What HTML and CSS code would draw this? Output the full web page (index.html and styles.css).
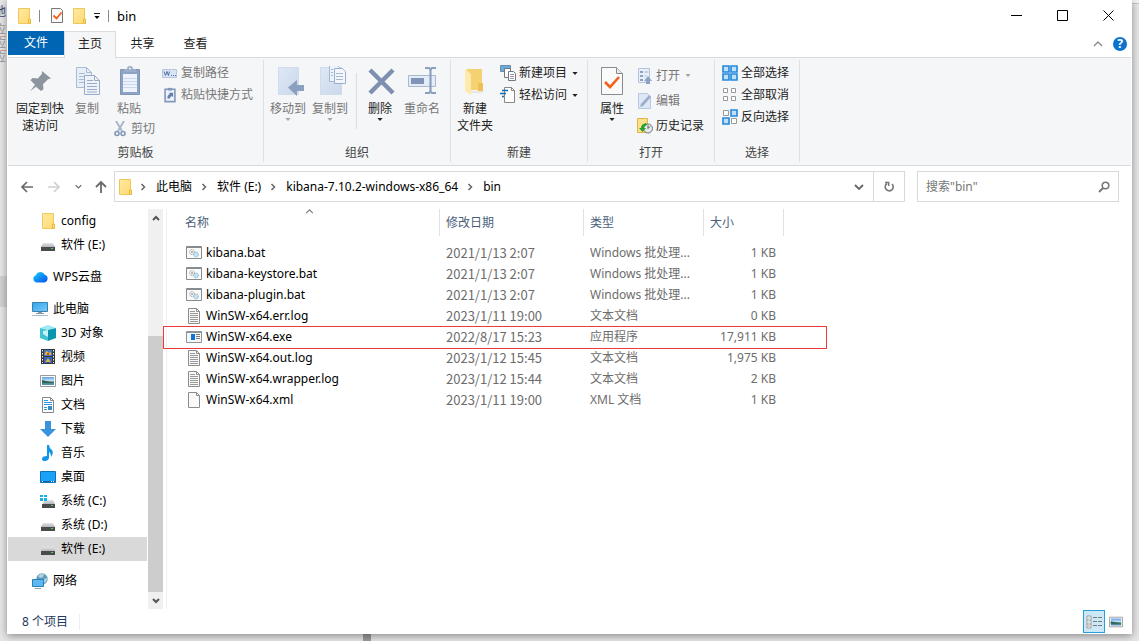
FILE: index.html
```html
<!DOCTYPE html>
<html lang="zh-CN">
<head>
<meta charset="utf-8">
<title>bin</title>
<link rel="stylesheet" href="styles.css">
</head>
<body>
<svg class="sprite" aria-hidden="true">
  <defs>
    <linearGradient id="gFolder" x1="0" y1="0" x2="1" y2="1"><stop offset="0" stop-color="#ffe9a2"/><stop offset="1" stop-color="#ffd970"/></linearGradient>
    <linearGradient id="gBlue" x1="0" y1="0" x2="1" y2="1"><stop offset="0" stop-color="#2fa4ef"/><stop offset="1" stop-color="#7ccaf8"/></linearGradient>
    <linearGradient id="gPale" x1="0" y1="0" x2="1" y2="1"><stop offset="0" stop-color="#dfe8f5"/><stop offset="1" stop-color="#c9d8ec"/></linearGradient>
    <linearGradient id="gCloud" x1="0" y1="0" x2="1" y2="1"><stop offset="0" stop-color="#17d1f5"/><stop offset="1" stop-color="#0a4df0"/></linearGradient>
    <linearGradient id="gDrive" x1="0" y1="0" x2="0" y2="1"><stop offset="0" stop-color="#e3e4e6"/><stop offset="1" stop-color="#b5b7ba"/></linearGradient>
    <linearGradient id="gPhoto" x1="0" y1="0" x2="0" y2="1"><stop offset="0" stop-color="#5b9ee8"/><stop offset=".5" stop-color="#cfe6f5"/><stop offset=".6" stop-color="#3e7b6d"/><stop offset="1" stop-color="#5f94b8"/></linearGradient>
  </defs>
  <symbol id="folder" viewBox="0 0 16 18"><path d="M1.500 1.500h11v10l1 1v4h-12z" fill="url(#gFolder)" stroke="#ecc95a"/><path d="M11.500 16v-4h2v4.500h-2" fill="#ffdf80" stroke="#e6b93c"/></symbol>
  <symbol id="checkdoc" viewBox="0 0 32 32"><path d="M5.500 1.500h15l6 6v21h-21z" fill="#fafafa" stroke="#8a8a8a"/><path d="M20.500 1.500v6h6" fill="#e8e8e8" stroke="#8a8a8a"/><path d="M9 16l5 5 9-10" fill="none" stroke="#f4601c" stroke-width="2.600"/></symbol>
  <symbol id="checkdocsm" viewBox="0 0 14 17"><path d="M1.500 1.500h9l2 2v12h-11z" fill="#fafafa" stroke="#777"/><path d="M3.500 8.500l3 3 5-6" fill="none" stroke="#f0601c" stroke-width="1.800"/></symbol>
  <symbol id="caret" viewBox="0 0 7 4"><path d="M0 0h7L3.500 4z" fill="currentColor"/></symbol>
  <symbol id="pin" viewBox="0 0 32 32"><path d="M18 5l9 7.500-3 .800-5 5 .500 5-2.500 1.700-5-4.300-6 4.500 5-6.500-4.500-4.500 2-2.300 5.300.600 4-4.500z" fill="#8c959d"/></symbol>
  <symbol id="copy" viewBox="0 0 32 32"><path d="M5.500 1.500h10l5 5v15h-15z" fill="#e7eef8" stroke="#a9bad3"/><path d="M15.500 1.500v5h5M8 7.500h6M8 10.500h9M8 13.500h9M8 16.500h9" fill="none" stroke="#a9bad3"/><path d="M13.500 9.500h10l5 5v14h-15z" fill="#eef3fa" stroke="#98acca"/><path d="M23.500 9.500v5h5M16 14.500h6M16 17.500h10M16 20.500h10M16 23.500h10M16 26h10" fill="none" stroke="#98acca"/></symbol>
  <symbol id="paste" viewBox="0 0 32 32"><path d="M7.500 3.500h19v25h-19z" fill="#8ea3c3" stroke="#8094b7"/><path d="M10 8h14v18H10z" fill="#edf3fc"/><path d="M10 12.500h14M10 15.500h14M10 18.500h14M10 21.500h14" stroke="#cad8ed"/><path d="M11 6V3h3q0-3 3-3t3 3h3v3z" fill="#9badca"/><circle cx="17" cy="2.500" r="1" fill="#f5f6f7"/></symbol>
  <symbol id="path" viewBox="0 0 16 16"><path d="M.5 4.500h14v8H.5z" fill="#d9e5f5" stroke="#b5c6de"/><path d="M2 6.500l1.500 4 1.500-4 1.500 4 1-4" fill="none" stroke="#52719e"/><path d="M9 10h1v1H9zM11 10h1v1h-1zM13 10h1v1h-1z" fill="#52719e"/></symbol>
  <symbol id="shortcut" viewBox="0 0 16 18"><path d="M2.500 2.500h11v14h-11z" fill="#eef4fc" stroke="#8397b9" stroke-width="1.800"/><path d="M5.500 1h5v3h-5z" fill="#8397b9"/><path d="M5 13q0-4 3-5L6.500 6.500h5v5L10 10q-2 1-2 3z" fill="#6680ab"/></symbol>
  <symbol id="cut" viewBox="0 0 12 16"><path d="M2 0l6 10M10 0L4 10" stroke="#a5b2c8" stroke-width="1.800"/><circle cx="3" cy="12.500" r="2" fill="none" stroke="#8498b9" stroke-width="1.600"/><circle cx="9" cy="12.500" r="2" fill="none" stroke="#8498b9" stroke-width="1.600"/></symbol>
  <symbol id="moveto" viewBox="0 0 32 32"><path d="M6.500 1.500h20v27h-20z" fill="url(#gPale)" stroke="#d0dcec"/><path d="M16 21.500l9-7.500v5h7v6h-7v5z" fill="#8b9fbf"/></symbol>
  <symbol id="copyto" viewBox="0 0 32 32"><path d="M6.500 1.500h21v27h-21z" fill="url(#gPale)" stroke="#d0dcec"/><path d="M15.500-.5h8l4 4v12h-12z" fill="#edf3fb" stroke="#a6b7d0"/><path d="M20.500 2.500h8l3 3v12h-11z" fill="#f3f7fc" stroke="#9caecb"/><path d="M22 7.500h7M22 10.500h7M22 13.500h7M17 3.500h2M17 6.500h2M17 9.500h2" stroke="#a6b7d0"/></symbol>
  <symbol id="delete" viewBox="0 0 32 32"><path d="M6 4l23 23M29 4L6 27" stroke="#7e90af" stroke-width="4.500"/></symbol>
  <symbol id="rename" viewBox="0 0 32 32"><path d="M2.500 9.500h27v11h-27z" fill="#e4ecf8" stroke="#a9b9d2"/><path d="M5 12h13v6H5z" fill="#7f94b8"/><path d="M19 2h4l1.500 1.500L26 2h4M24.500 3v23M19 27h4l1.500-1.500L26 27h4" fill="none" stroke="#8c9fbe" stroke-width="2.200"/></symbol>
  <symbol id="newfolder" viewBox="0 0 32 32"><path d="M8 3h15v21H8z" fill="#f5d271"/><path d="M19 17h5v8h-5z" fill="#eebf54"/><path d="M6 3l6 5v21l-6-4z" fill="#ffe9ac"/><path d="M12 25h14l-4 2H12z" fill="#e9e6df"/></symbol>
  <symbol id="newitem" viewBox="0 0 16 16"><path d="M.5.500h10v6H.5z" fill="#68adde" stroke="#6c8da7"/><path d="M4.500 3.500h6v9h-6z" fill="#fff" stroke="#777"/><path d="M8.500 6.500h5l2 2v7h-7z" fill="#fff" stroke="#777"/><path d="M10 9.500h4M10 13.500h4" stroke="#6da7dc"/><path d="M10 11.500h4" stroke="#e07777"/></symbol>
  <symbol id="easy" viewBox="0 0 16 16"><path d="M4.500.500h7l3 3v12h-10z" fill="#fff" stroke="#888"/><path d="M11.500.500v3h3" fill="none" stroke="#888"/><path d="M2 3.500h6M0 6.500h6M2 9.500h2" stroke="#1569b2" stroke-width="1.500"/></symbol>
  <symbol id="opens" viewBox="0 0 16 16"><path d="M1.500.500h11v14h-11z" fill="#e8eff9" stroke="#b4c3dc"/><path d="M3 3h3v2H3zM3 7h3v2H3zM3 11h3v2H3z" fill="#8ca0c1"/><path d="M7.500 4h4M7.500 8h2" stroke="#a4b5d0"/><path d="M9 16v-3H7l4-5 4 5h-2v3z" fill="#8ea2c4"/></symbol>
  <symbol id="edits" viewBox="0 0 16 16"><path d="M1.500.500h9l3 3v12h-12z" fill="#dde8f6" stroke="#b9c9df"/><path d="M3 14l1-3 8-9 2 2-8 9z" fill="#9badca"/></symbol>
  <symbol id="history" viewBox="0 0 16 16"><path d="M.5.500h10v14H.5z" fill="#ffe08a" stroke="#dfb746"/><circle cx="11" cy="10.500" r="4.500" fill="#e5e7e9" stroke="#777"/><path d="M11 7.500v3l2-2" fill="none" stroke="#555"/><path d="M9 5q-5 1-5 5H2l3.500 4L9 10H7q0-2 3-3z" fill="#2aa12f"/></symbol>
  <symbol id="selall" viewBox="0 0 16 16"><path d="M1 1h6v6H1zM9 1h6v6H9zM1 9h6v6H1zM9 9h6v6H9z" fill="#bfe0f8" stroke="#2488dc" stroke-width="1.600"/></symbol>
  <symbol id="selnone" viewBox="0 0 16 16"><path d="M1.500 1.500h4v4h-4zM9.500 1.500h4v4h-4zM1.500 9.500h4v4h-4zM9.500 9.500h4v4h-4z" fill="#fff" stroke="#999"/></symbol>
  <symbol id="selinv" viewBox="0 0 16 16"><path d="M1.500 1.500h5v5h-5zM9.500 9.500h5v5h-5z" fill="#fff" stroke="#999"/><path d="M9 1h6v6H9zM1 9h6v6H1z" fill="#bfe0f8" stroke="#2488dc" stroke-width="1.600"/></symbol>
  <symbol id="left" viewBox="0 0 14 12"><path d="M13 6H2M7 1L2 6l5 5" fill="none" stroke="currentColor" stroke-width="1.700"/></symbol>
  <symbol id="right" viewBox="0 0 14 12"><path d="M1 6h11M7 1l5 5-5 5" fill="none" stroke="currentColor" stroke-width="1.700"/></symbol>
  <symbol id="up" viewBox="0 0 12 14"><path d="M6 13V2M1 7l5-5 5 5" fill="none" stroke="currentColor" stroke-width="1.800"/></symbol>
  <symbol id="chevd" viewBox="0 0 10 6"><path d="M1 1l4 4 4-4" fill="none" stroke="currentColor" stroke-width="1.800"/></symbol>
  <symbol id="chevu" viewBox="0 0 10 6"><path d="M1 5l4-4 4 4" fill="none" stroke="currentColor" stroke-width="1.300"/></symbol>
  <symbol id="chevr" viewBox="0 0 6 8"><path d="M1.500 1l3 3-3 3" fill="none" stroke="currentColor" stroke-width="1.500"/></symbol>
  <symbol id="refresh" viewBox="0 0 12 12"><path d="M9 3a4 4 0 1 1-5-.500" fill="none" stroke="#777" stroke-width="1.600"/><path d="M2 1.500h3.700V5" fill="none" stroke="#777" stroke-width="1.500"/></symbol>
  <symbol id="search" viewBox="0 0 12 12"><circle cx="7.500" cy="4.500" r="3.300" fill="none" stroke="#777" stroke-width="1.600"/><path d="M5 7L1 11" stroke="#777" stroke-width="2"/></symbol>
  <symbol id="drive" viewBox="0 0 16 16"><path d="M3 6h10l2 4H1z" fill="url(#gDrive)"/><path d="M1 10h14v4H1z" fill="#4a4b4d"/><path d="M11 11h2v1h-2z" fill="#35e04a"/></symbol>
  <symbol id="drivec" viewBox="0 0 16 16"><path d="M4 7h9l2 4H3z" fill="url(#gDrive)"/><path d="M2 11h13v4H2z" fill="#4a4b4d"/><path d="M11 12h2v1h-2z" fill="#35e04a"/><path d="M0 2h3v2H0zM4 2h3v2H4zM0 5h3v3H0zM4 5h3v3H4z" fill="#13b1e8"/></symbol>
  <symbol id="cloud" viewBox="0 0 16 16"><path d="M4.500 13.500a3.800 3.800 0 0 1-.700-7.300 5 5 0 0 1 9-.500 4 4 0 0 1-1 7.800z" fill="url(#gCloud)"/></symbol>
  <symbol id="pc" viewBox="0 0 16 16"><path d="M.5 1.500h15v9H.5z" fill="url(#gBlue)" stroke="#3980ad"/><path d="M6 11h4v1H6zM4 12h8v1H4z" fill="#8a9aa6"/><path d="M0 14h16v1H0z" fill="#a9bfce"/></symbol>
  <symbol id="cube" viewBox="0 0 16 16"><path d="M0 3l8-3 8 3-8 2z" fill="#9beaf1"/><path d="M0 3l8 2v11l-8-3z" fill="#42c3d2"/><path d="M16 3L8 5v11l8-3z" fill="#0c96ae"/><path d="M3 6l5-1v7l-5-3z" fill="#c4f4f7"/></symbol>
  <symbol id="video" viewBox="0 0 16 16"><path d="M1 0h14v15H1z" fill="#36383c"/><path d="M4 1h8v6H4z" fill="#4b78c4"/><path d="M4 8h8v6H4z" fill="#3763b8"/><path d="M5 4l2-2 2 2 2-1v3H5z" fill="#e5b72b"/><path d="M7 4h2v2H7zM6 11h2v2H6z" fill="#ca4c30"/><path d="M5 13l3-4 3 4z" fill="#d9af3d"/><path d="M2.500 1v13M13.500 1v13" stroke="#eee" stroke-dasharray="1.500 1.500"/></symbol>
  <symbol id="photo" viewBox="0 0 16 16"><path d="M.5 2.500h15v11H.5z" fill="#fff" stroke="#999"/><path d="M2 4h12v8H2z" fill="url(#gPhoto)"/><path d="M2 7q5 1 12 3H2z" fill="#2c6659"/></symbol>
  <symbol id="doc" viewBox="0 0 16 16"><path d="M2.500.500h8l3 3v12h-11z" fill="#fff" stroke="#888"/><path d="M10.500.500v3h3" fill="none" stroke="#888"/><path d="M4 3.500h4M4 5.500h8M4 7.500h8M4 10.500h3M4 12.500h3" stroke="#2b98dd"/><path d="M8 9h4v4H8z" fill="#398ac3"/></symbol>
  <symbol id="down" viewBox="0 0 16 16"><path d="M5 0h6v8h5l-8 8-8-8h5z" fill="#3b92dc"/></symbol>
  <symbol id="music" viewBox="0 0 16 16"><path d="M7 0h2q0 3 3 5 2 3-1 7 0-4-2-5v6q-1 3-4 3-3 0-3-2 0-3 5-3z" fill="#1296e8"/></symbol>
  <symbol id="desktop" viewBox="0 0 16 16"><path d="M.5 2.500h15v11H.5z" fill="#1aa2f8" stroke="#0b72bd"/><path d="M1 12h14v1H1z" fill="#0b68ac"/><path d="M2 12h1v1H2zM11 12h1v1h-1zM13 12h1v1h-1z" fill="#fff"/></symbol>
  <symbol id="network" viewBox="0 0 16 16"><circle cx="10" cy="6" r="5.700" fill="#5f9cbd"/><path d="M6 3q3-3 6-2l-1 3-3 1zM12 6l3-1q0 4-3 5z" fill="#b4d5df"/><path d="M.5 6.500h11v7H.5z" fill="#5bb8f3" stroke="#2a7fb5"/><path d="M3 15h6v1H3z" fill="#8aa2b2"/></symbol>
  <symbol id="bat" viewBox="0 0 16 16"><path d="M.5 1.500h15v12H.5z" fill="#fafafa" stroke="#868b90"/><path d="M1 1h14v2H1z" fill="#868b90"/><circle cx="6" cy="7" r="2.400" fill="none" stroke="#8a8f94" stroke-dasharray="1 .6"/><circle cx="6" cy="7" r="1" fill="#9ba0a4"/><circle cx="10" cy="9.500" r="2.400" fill="#c7e2f2" stroke="#7fabc6" stroke-dasharray="1 .6"/></symbol>
  <symbol id="log" viewBox="0 0 16 16"><path d="M2.500.500h8l3 3v12h-11z" fill="#f8f8f8" stroke="#8c8c8c"/><path d="M10.500.500v3h3" fill="none" stroke="#8c8c8c"/><path d="M4 3.500h5M4 5.500h8M4 7.500h8M4 9.500h8M4 11.500h8M4 13.500h8" stroke="#999"/></symbol>
  <symbol id="file" viewBox="0 0 16 16"><path d="M2.500.500h8l3 3v12h-11z" fill="#fafafa" stroke="#8c8c8c"/><path d="M10.500.500v3h3" fill="none" stroke="#8c8c8c"/></symbol>
  <symbol id="exe" viewBox="0 0 16 16"><path d="M.5 2.500h15v11H.5z" fill="#f6f6f6" stroke="#8f9499"/><path d="M1 2h14v2H1z" fill="#8f9499"/><path d="M5 5h4v6H5z" fill="#0a74d8"/><path d="M10 5.500h4M10 7.500h4M10 9.500h4" stroke="#777"/></symbol>
  <symbol id="details" viewBox="0 0 17 14"><path d="M1 1h4v12H1z" fill="#fff" stroke="#999"/><path d="M1 5h4M1 9h4" stroke="#999"/><path d="M2.500 2.500h1v1h-1zM2.500 6.500h1v1h-1z" fill="#3a8"/><path d="M2.500 10.500h1v1h-1z" fill="#a33"/><path d="M7 2.500h4M12 2.500h4M7 6.500h4M12 6.500h4M7 10.500h4M12 10.500h4" stroke="#777"/></symbol>
</svg>

<div class="backdrop" aria-hidden="true">
  <span class="frag frag-1">地</span>
  <span class="frag frag-2">应</span>
  <span class="frag frag-3">应</span>
  <span class="frag frag-4">应</span>
  <span class="band"></span>
  <span class="topline"></span>
  <span class="notch"></span>
</div>

<div class="window">
  <header class="titlebar">
    <svg class="i-folder"><use href="#folder"/></svg>
    <span class="tsep"></span>
    <button class="plain" aria-label="属性"><svg class="i-check"><use href="#checkdocsm"/></svg></button>
    <button class="plain" aria-label="新建文件夹"><svg class="i-folder"><use href="#folder"/></svg></button>
    <button class="plain quick" aria-label="自定义快速访问工具栏"><svg class="i-caret"><use href="#caret"/></svg></button>
    <span class="tsep"></span>
    <h1 class="title">bin</h1>
    <div class="winbtns">
      <button class="winbtn" aria-label="最小化"><svg width="11" height="11"><path d="M0 5.500h11" stroke="#000"/></svg></button>
      <button class="winbtn" aria-label="最大化"><svg width="11" height="11"><path d="M.5.500h10v10H.5z" fill="none" stroke="#000"/></svg></button>
      <button class="winbtn" aria-label="关闭"><svg width="11" height="11"><path d="M.5.500l10 10M10.500.500l-10 10" stroke="#000"/></svg></button>
    </div>
  </header>

  <nav class="tabs">
    <button class="tab file">文件</button>
    <button class="tab active">主页</button>
    <button class="tab">共享</button>
    <button class="tab">查看</button>
    <div class="tabtools">
      <button class="plain collapse" aria-label="最小化功能区"><svg class="i-chev"><use href="#chevu"/></svg></button>
      <button class="help" aria-label="帮助">?</button>
    </div>
  </nav>

  <section class="ribbon">
    <div class="group g-clip">
      <div class="gbody">
        <button class="big w56"><svg class="i32"><use href="#pin"/></svg><span>固定到快<br>速访问</span></button>
        <button class="big w38 off"><svg class="i32"><use href="#copy"/></svg><span>复制</span></button>
        <div class="pastecol">
          <button class="big w46 off"><svg class="i32"><use href="#paste"/></svg><span>粘贴</span></button>
          <button class="small cut off"><svg class="i-cut"><use href="#cut"/></svg>剪切</button>
        </div>
        <div class="stack">
          <button class="small off"><svg class="i16"><use href="#path"/></svg>复制路径</button>
          <button class="small off"><svg class="i16"><use href="#shortcut"/></svg>粘贴快捷方式</button>
        </div>
      </div>
      <div class="glabel">剪贴板</div>
    </div>
    <div class="group g-org">
      <div class="gbody">
        <button class="big w42 off"><svg class="i32"><use href="#moveto"/></svg><span>移动到</span><svg class="i-drop"><use href="#caret"/></svg></button>
        <button class="big w42 off"><svg class="i32"><use href="#copyto"/></svg><span>复制到</span><svg class="i-drop"><use href="#caret"/></svg></button>
        <span class="isep"></span>
        <button class="big w40"><svg class="i32"><use href="#delete"/></svg><span>删除</span><svg class="i-drop"><use href="#caret"/></svg></button>
        <button class="big w44 off"><svg class="i32"><use href="#rename"/></svg><span>重命名</span></button>
      </div>
      <div class="glabel">组织</div>
    </div>
    <div class="group g-new">
      <div class="gbody">
        <button class="big w40"><svg class="i32"><use href="#newfolder"/></svg><span>新建<br>文件夹</span></button>
        <div class="stack">
          <button class="small"><svg class="i16"><use href="#newitem"/></svg>新建项目<svg class="i-drop"><use href="#caret"/></svg></button>
          <button class="small"><svg class="i16"><use href="#easy"/></svg>轻松访问<svg class="i-drop"><use href="#caret"/></svg></button>
        </div>
      </div>
      <div class="glabel">新建</div>
    </div>
    <div class="group g-open">
      <div class="gbody">
        <button class="big w40"><svg class="i32"><use href="#checkdoc"/></svg><span>属性</span><svg class="i-drop"><use href="#caret"/></svg></button>
        <div class="stack tall">
          <button class="small off"><svg class="i16"><use href="#opens"/></svg>打开<svg class="i-drop"><use href="#caret"/></svg></button>
          <button class="small off"><svg class="i16"><use href="#edits"/></svg>编辑</button>
          <button class="small"><svg class="i16"><use href="#history"/></svg>历史记录</button>
        </div>
      </div>
      <div class="glabel">打开</div>
    </div>
    <div class="group g-sel">
      <div class="gbody">
        <div class="stack">
          <button class="small"><svg class="i16"><use href="#selall"/></svg>全部选择</button>
          <button class="small"><svg class="i16"><use href="#selnone"/></svg>全部取消</button>
          <button class="small"><svg class="i16"><use href="#selinv"/></svg>反向选择</button>
        </div>
      </div>
      <div class="glabel">选择</div>
    </div>
  </section>

  <div class="navrow">
    <div class="navbtns">
      <button class="plain" aria-label="后退"><svg class="i-arrow"><use href="#left"/></svg></button>
      <button class="plain faint" aria-label="前进"><svg class="i-arrow"><use href="#right"/></svg></button>
      <button class="plain" aria-label="最近浏览的位置"><svg class="i-chevs"><use href="#chevd"/></svg></button>
      <button class="plain" aria-label="上移"><svg class="i-up"><use href="#up"/></svg></button>
    </div>
    <div class="address">
      <svg class="i-folder"><use href="#folder"/></svg>
      <svg class="i-sep"><use href="#chevr"/></svg><a href="#pc">此电脑</a>
      <svg class="i-sep"><use href="#chevr"/></svg><a href="#e">软件 (E:)</a>
      <svg class="i-sep"><use href="#chevr"/></svg><a href="#k">kibana-7.10.2-windows-x86_64</a>
      <svg class="i-sep"><use href="#chevr"/></svg><a href="#b">bin</a>
      <button class="plain history" aria-label="以前的位置"><svg class="i-chev"><use href="#chevd"/></svg></button>
      <button class="plain refresh" aria-label="刷新"><svg class="i12"><use href="#refresh"/></svg></button>
    </div>
    <div class="search">
      <input type="text" placeholder="搜索&quot;bin&quot;" aria-label="搜索">
      <svg class="i12"><use href="#search"/></svg>
    </div>
  </div>

  <main class="content">
    <nav class="tree">
      <a class="node" href="#c"><svg class="i-folder"><use href="#folder"/></svg>config</a>
      <a class="node" href="#e"><svg class="i16"><use href="#drive"/></svg>软件 (E:)</a>
      <a class="node root" href="#w"><svg class="i16"><use href="#cloud"/></svg>WPS云盘</a>
      <a class="node root" href="#p"><svg class="i16"><use href="#pc"/></svg>此电脑</a>
      <a class="node" href="#3"><svg class="i16"><use href="#cube"/></svg>3D 对象</a>
      <a class="node" href="#v"><svg class="i16"><use href="#video"/></svg>视频</a>
      <a class="node" href="#i"><svg class="i16"><use href="#photo"/></svg>图片</a>
      <a class="node" href="#d"><svg class="i16"><use href="#doc"/></svg>文档</a>
      <a class="node" href="#x"><svg class="i16"><use href="#down"/></svg>下载</a>
      <a class="node" href="#m"><svg class="i16"><use href="#music"/></svg>音乐</a>
      <a class="node" href="#t"><svg class="i16"><use href="#desktop"/></svg>桌面</a>
      <a class="node" href="#sc"><svg class="i16"><use href="#drivec"/></svg>系统 (C:)</a>
      <a class="node" href="#sd"><svg class="i16"><use href="#drive"/></svg>系统 (D:)</a>
      <a class="node selected" href="#se"><svg class="i16"><use href="#drive"/></svg>软件 (E:)</a>
      <a class="node root" href="#n"><svg class="i16"><use href="#network"/></svg>网络</a>
    </nav>
    <div class="scrollbar">
      <button class="plain sbtn" aria-label="向上滚动"><svg class="i-chevb"><path d="M1 5l3-3 3 3" fill="none" stroke="currentColor" stroke-width="2"/></svg></button>
      <div class="track"><div class="thumb"></div></div>
      <button class="plain sbtn" aria-label="向下滚动"><svg class="i-chevb"><path d="M1 1l3 3 3-3" fill="none" stroke="currentColor" stroke-width="2"/></svg></button>
    </div>
    <div class="files">
      <table>
        <colgroup><col class="c-name"><col class="c-date"><col class="c-type"><col class="c-size"></colgroup>
        <thead><tr>
          <th scope="col">名称<svg class="sort"><use href="#chevu"/></svg></th>
          <th scope="col">修改日期</th><th scope="col">类型</th><th scope="col">大小</th>
        </tr></thead>
        <tbody>
          <tr><td><span class="fname"><svg class="i16"><use href="#bat"/></svg>kibana.bat</span></td><td>2021/1/13 2:07</td><td>Windows 批处理...</td><td>1 KB</td></tr>
          <tr><td><span class="fname"><svg class="i16"><use href="#bat"/></svg>kibana-keystore.bat</span></td><td>2021/1/13 2:07</td><td>Windows 批处理...</td><td>1 KB</td></tr>
          <tr><td><span class="fname"><svg class="i16"><use href="#bat"/></svg>kibana-plugin.bat</span></td><td>2021/1/13 2:07</td><td>Windows 批处理...</td><td>1 KB</td></tr>
          <tr><td><span class="fname"><svg class="i16"><use href="#log"/></svg>WinSW-x64.err.log</span></td><td>2023/1/11 19:00</td><td>文本文档</td><td>0 KB</td></tr>
          <tr class="marked"><td><span class="fname"><svg class="i16"><use href="#exe"/></svg>WinSW-x64.exe</span><span class="mark"></span></td><td>2022/8/17 15:23</td><td>应用程序</td><td>17,911 KB</td></tr>
          <tr><td><span class="fname"><svg class="i16"><use href="#log"/></svg>WinSW-x64.out.log</span></td><td>2023/1/12 15:45</td><td>文本文档</td><td>1,975 KB</td></tr>
          <tr><td><span class="fname"><svg class="i16"><use href="#log"/></svg>WinSW-x64.wrapper.log</span></td><td>2023/1/12 15:44</td><td>文本文档</td><td>2 KB</td></tr>
          <tr><td><span class="fname"><svg class="i16"><use href="#file"/></svg>WinSW-x64.xml</span></td><td>2023/1/11 19:00</td><td>XML 文档</td><td>1 KB</td></tr>
        </tbody>
      </table>
    </div>
  </main>

  <footer class="status">
    <span class="count">8 个项目</span>
    <div class="views">
      <button class="view on" aria-label="详细信息"><svg class="i-details"><use href="#details"/></svg></button>
      <button class="view" aria-label="大缩略图"><svg class="i16"><use href="#photo"/></svg></button>
    </div>
  </footer>
</div>
</body>
</html>
```
FILE: styles.css
```css
* { box-sizing: border-box; }

body {
  margin: 0;
  min-height: 100vh;
  padding: 0 7px 7px;
  display: flex;
  background: #e6e6e6;
  color: #000;
  font: 12px/16px "Noto Sans", "Noto Sans CJK SC", sans-serif;
  overflow: hidden;
}

button, input {
  font: inherit;
  color: inherit;
  border: 0;
  padding: 0;
  background: none;
}

a { color: inherit; text-decoration: none; }
svg { display: block; flex: none; overflow: visible; }
.sprite { position: absolute; width: 0; height: 0; }

.i-folder { width: 16px; height: 18px; }
.i-check { width: 14px; height: 17px; }
.i-caret, .i-drop { width: 6px; height: 3px; }
.i-chev { width: 10px; height: 6px; }
.i-chevs { width: 7px; height: 5px; }
.i-chevb { width: 8px; height: 6px; }
.i-arrow { width: 14px; height: 12px; }
.i-up { width: 12px; height: 14px; }
.i-sep { width: 6px; height: 8px; color: #666; }
.i-cut { width: 12px; height: 16px; }
.i-details { width: 17px; height: 14px; }
.i12 { width: 12px; height: 12px; }
.i16 { width: 16px; height: 16px; }
.i32 { width: 32px; height: 32px; }

/* Desktop behind the window */
.backdrop { position: absolute; inset: 0; overflow: hidden; z-index: -1; background: #e6e6e6; }
.frag { position: absolute; left: -6px; line-height: 12px; color: #999; border-bottom: 1px solid #e39a9a; }
.frag-1 { top: 6px; color: #446; border: 0; }
.frag-2 { top: 24px; }
.frag-3 { top: 38px; }
.frag-4 { top: 52px; border: 0; }
.band { position: absolute; left: 0; top: 276px; width: 7px; height: 31px; background: #d2d2d2; }
.topline { position: absolute; right: 0; top: 0; width: 7px; height: 4px; background: #f2f3f3; border-bottom: 1px solid #c2c6c6; }
.notch { position: absolute; left: 363px; bottom: 0; width: 8px; height: 7px; background: #9c9c9c; }

.window {
  flex: 1;
  display: flex;
  flex-direction: column;
  border: 1px solid #fff;
  border-width: 0 1px;
  background: #fff;
  box-shadow: 0 2px 8px rgba(0, 0, 0, .4);
}

.plain { display: flex; align-items: center; justify-content: center; }

/* Title bar */
.titlebar { display: flex; align-items: center; height: 31px; padding-left: 9px; }
.tsep { width: 1px; height: 12px; margin: 0 10px 0 6px; background: #888; }
.titlebar .i-check { margin-right: 8px; }
.quick { flex-direction: column; gap: 2px; margin-left: 6px; }
.quick::before { content: ""; width: 6px; height: 1px; background: #222; }
.quick + .tsep { margin: 0 8px; }
.title { margin: 0; font-size: 13px; font-weight: 400; }
.winbtns { margin-left: auto; display: flex; height: 31px; }
.winbtn { width: 46px; display: flex; align-items: center; justify-content: center; }

/* Ribbon tabs */
.tabs { display: flex; height: 27px; border-bottom: 1px solid #dadbdc; }
.tab { height: 26px; width: 53px; padding-bottom: 1px; color: #222; }
.tab.file { width: 56px; height: 24px; padding: 0; background: #0066b4; color: #fff; }
.tab.active { width: 52px; height: 27px; padding-bottom: 3px; border: 1px solid #dadbdc; border-bottom: 0; background: #f5f6f7; }
.tabtools { margin-left: auto; display: flex; align-items: center; gap: 10px; padding-right: 4px; }
.collapse { color: #888; }
.help {
  width: 14px; height: 14px; border-radius: 50%;
  background: #0a73d0; color: #fff; font-weight: 700; line-height: 14px;
}

/* Ribbon */
.ribbon { display: flex; height: 108px; background: #f5f6f7; border-bottom: 1px solid #dadbdc; color: #222; }
.group { display: flex; flex-direction: column; margin: 2px 0 3px; border-right: 1px solid #e0e1e3; }
.g-clip { width: 256px; }
.g-org { width: 187px; }
.g-new { width: 137px; }
.g-open { width: 127px; }
.g-sel { width: 85px; }
.gbody { flex: 1; display: flex; align-items: flex-start; padding-left: 4px; }
.g-org .gbody { padding-left: 3px; }
.g-sel .gbody { padding-left: 7px; }
.glabel { line-height: 18px; text-align: center; color: #444; }

.big { display: flex; flex-direction: column; align-items: center; padding-top: 6px; line-height: 17px; }
.big .i32 { margin-bottom: 2px; }
.big .i-drop { margin-top: 1px; }
.off { color: #777; }
.off .i-drop { color: #a5a5a5; }
.w38 { width: 38px; }
.w40 { width: 40px; }
.w42 { width: 42px; }
.w44 { width: 44px; }
.w46 { width: 46px; }
.w56 { width: 56px; }
.big span { white-space: nowrap; }
.small { display: flex; align-items: center; gap: 3px; height: 22px; white-space: nowrap; }
.small .i-drop { margin-left: 2px; }
.cut { gap: 5px; height: 24px; padding-left: 8px; }
.pastecol { width: 56px; }
.stack { padding-top: 2px; }
.g-new .stack { padding-left: 5px; }
.tall { padding: 3px 0 0 5px; }
.tall .small { height: 25px; }
.isep { width: 1px; height: 56px; margin: 13px 3px 0 5px; background: #dcdde0; }

/* Address row */
.navrow { display: flex; align-items: center; height: 41px; padding-right: 12px; }
.navbtns { width: 106px; display: flex; align-items: center; justify-content: space-between; padding: 0 7px 0 12px; color: #6a6a6a; }
.faint { color: #d0d0d0; }
.address {
  flex: 1; display: flex; align-items: center; height: 31px;
  padding-left: 3px; border: 1px solid #d9d9d9;
}
.address .i-sep { margin: 0 10px 0 9px; }
.address .i-folder + .i-sep { margin-left: 6px; }
.history { width: 28px; height: 29px; margin-left: auto; color: #666; }
.refresh { width: 31px; height: 29px; border-left: 1px solid #d9d9d9; }
.search {
  width: 202px; height: 31px; margin-left: 12px; padding: 0 8px;
  display: flex; align-items: center; border: 1px solid #d9d9d9;
}
.search input { flex: 1; min-width: 0; outline: 0; }
.search input::placeholder { color: #777; opacity: 1; }

/* Main area */
.content { flex: 1; display: flex; padding-top: 2px; }
.tree { width: 139px; }
.node { display: flex; align-items: center; gap: 5px; height: 24px; padding-left: 32px; }
.node .i-folder { margin-left: 1px; margin-right: -1px; }
.node.root { margin-top: 8px; padding-left: 24px; }
.selected { background: #d9d9d9; }
.scrollbar { width: 15px; margin: 0 1px; display: flex; flex-direction: column; background: #f0f0f0; color: #555; }
.sbtn { height: 17px; }
.track { flex: 1; display: flex; flex-direction: column; justify-content: flex-end; }
.thumb { height: 70%; background: #cdcdcd; }

.files { flex: 1; margin-left: 2px; border-left: 1px solid #f0f0f0; }
table { width: 617px; table-layout: fixed; border-collapse: separate; border-spacing: 0; }
.c-name { width: 273px; }
.c-date { width: 144px; }
.c-type { width: 120px; }
.c-size { width: 80px; }
th {
  position: relative; height: 27px; padding: 0 0 0 6px;
  border-right: 1px solid #e2e2e2; color: #4c607a; font-weight: 400; text-align: left;
}
th:first-child { padding-left: 18px; }
.sort { position: absolute; left: 138px; top: 0; width: 9px; height: 5px; color: #777; }
thead::after { content: ""; display: block; height: 6px; }
td { height: 21px; padding: 0 0 0 6px; color: #6d6d6d; white-space: nowrap; }
td:first-child { padding-left: 19px; color: #000; }
td:nth-child(2) { font-family: "Noto Sans CJK SC", sans-serif; font-size: 13px; }
td:last-child { padding: 0 8px 0 0; text-align: right; }
.fname { display: flex; align-items: center; gap: 4px; }
.marked { position: relative; }
.mark { position: absolute; left: -4px; top: 0; width: 664px; height: 23px; border: 1px solid #ed3b3b; }

/* Status bar */
.status { display: flex; align-items: center; justify-content: space-between; height: 25px; padding: 0 4px 0 14px; color: #1e395b; }
.count { padding-right: 11px; border-right: 1px solid #eee; }
.views { display: flex; }
.view { width: 22px; height: 23px; display: flex; align-items: center; justify-content: center; }
.view.on { background: #cce8f6; border: 1px solid #26a0da; }
.view .i16 { width: 14px; height: 14px; }
```
